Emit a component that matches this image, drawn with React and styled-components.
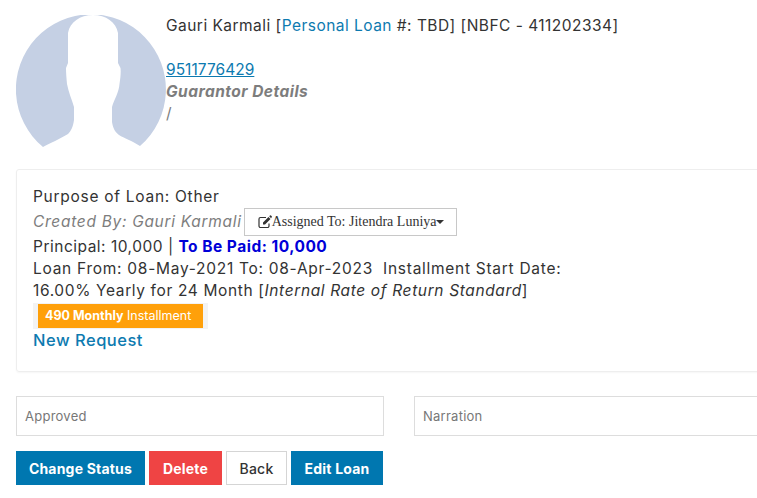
import React from 'react';
import styled, { createGlobalStyle } from 'styled-components';

const GlobalStyle = createGlobalStyle`
  html, body {
    margin: 0;
    height: 100%;
    overflow: hidden;
    background: #fff;
  }
`;

const Page = styled.div`
  box-sizing: border-box;
  width: 798px;
  padding: 15px 16px 0;
  font-family: 'Inter', 'Liberation Sans', sans-serif;
  font-size: 15.5px;
  color: #333;
`;

const Profile = styled.section`
  display: flex;
  height: 155px;
`;

const Avatar = styled.svg`
  flex: none;
  width: 150px;
  height: 134px;
`;

const Info = styled.div`
  line-height: 22px;
`;

const Line = styled.div`
  min-height: 22px;
  letter-spacing: ${p => p.$track || 0.47}px;
`;

const Accent = styled.span`
  color: #0d7ab0;
`;

const Phone = styled.a`
  color: #0d7ab0;
  text-decoration: underline;
  letter-spacing: 0.04px;
`;

const Guarantor = styled.div`
  color: #7d7d7d;
  font-style: italic;
  font-weight: 700;
  letter-spacing: 0.47px;
`;

const Muted = styled.div`
  color: #7d7d7d;
`;

const Card = styled.section`
  box-sizing: border-box;
  height: 203px;
  margin-top: -1px;
  padding: 16px 16px 0;
  border: 1px solid #eee;
  border-radius: 3px;
  box-shadow: 0 1px 2px rgba(0, 0, 0, 0.04);
  line-height: 22px;
`;

const CreatedRow = styled.div`
  display: flex;
  align-items: center;
  height: 28px;
  gap: 2px;
`;

const CreatedBy = styled.em`
  color: #7d7d7d;
  letter-spacing: 0.7px;
`;

const AssignButton = styled.button`
  display: flex;
  align-items: center;
  box-sizing: border-box;
  width: 213px;
  height: 28px;
  padding: 0 0 0 13px;
  border: 1px solid #c8c8c8;
  background: #fff;
  color: #333;
  font-family: 'Liberation Serif', serif;
  font-size: 14px;
  white-space: nowrap;
`;

const EditIcon = styled.svg`
  flex: none;
  width: 14px;
  height: 14px;
`;

const Caret = styled.span`
  width: 0;
  height: 0;
  border-left: 4px solid transparent;
  border-right: 4px solid transparent;
  border-top: 4px solid #333;
`;

const Paid = styled.strong`
  color: #0000d8;
  font-weight: 700;
`;

const BadgeRow = styled.div`
  display: flex;
  margin-top: 1px;
`;

const BadgeWrap = styled.div`
  padding: 1px 5px;
  background: #f3f3f3;
`;

const Badge = styled.div`
  box-sizing: border-box;
  width: 165px;
  height: 24px;
  padding-left: 7px;
  background: #ffa00a;
  color: #fff;
  font-size: 12.5px;
  line-height: 23px;
  white-space: nowrap;
`;

const Link = styled.a`
  color: #0d7ab0;
  font-size: 16.5px;
  font-weight: 500;
  text-decoration: none;
`;

const FormRow = styled.div`
  display: grid;
  grid-template-columns: 368px 368px;
  gap: 30px;
  margin-top: 24px;
`;

const Field = styled.div`
  box-sizing: border-box;
  height: 40px;
  padding-left: 8px;
  border: 1px solid #ddd;
  color: #777;
  font-size: 13px;
  line-height: 38px;
  letter-spacing: 0.25px;
`;

const Buttons = styled.div`
  display: flex;
  gap: 4px;
  margin-top: 15px;
`;

const colours = {
  primary: ['#0077b0', '#fff', '#0077b0'],
  danger: ['#ef4444', '#fff', '#ef4444'],
  plain: ['#fff', '#333', '#d5d5d5'],
};

const Button = styled.button`
  box-sizing: border-box;
  width: ${p => p.$w}px;
  height: 34px;
  padding: 0;
  border: 1px solid ${p => colours[p.$kind][2]};
  background: ${p => colours[p.$kind][0]};
  color: ${p => colours[p.$kind][1]};
  font-family: 'Inter', 'Liberation Sans', sans-serif;
  font-size: 14px;
  font-weight: ${p => (p.$kind === 'plain' ? 500 : 700)};
  letter-spacing: 0.2px;
`;

export default function App() {
  return (
    <Page>
      <GlobalStyle />
      <Profile>
        <Avatar viewBox="16 15 150 134">
          <path
            fill="#c5d0e4"
            d="M43 147 A75 75 0 1 1 140 146 C132 141 124 138 119 135 C115 132 113 128 112 122 L112 107 C114 100 119 92 119.500 84 C120.500 78 121 72 120.500 68 L118 63 L118 33 C116 22 106 15 93 15 C80 15 70 22 68 33 L68 63 L66 68 C66 73 66.500 78 67 84 C68.500 92 72 100 74 107 L74 120 C73 127 71 131 68 134 C60 139 50 143 43 147 Z"
          />
        </Avatar>
        <Info>
          <Line>
            Gauri Karmali [<Accent>Personal Loan</Accent> #: TBD] [NBFC - 411202334]
          </Line>
          <Line />
          <Line>
            <Phone href="#">9511776429</Phone>
          </Line>
          <Guarantor>Guarantor Details</Guarantor>
          <Muted>/</Muted>
        </Info>
      </Profile>
      <Card>
        <Line $track={0.72}>Purpose of Loan: Other</Line>
        <CreatedRow>
          <CreatedBy>Created By: Gauri Karmali</CreatedBy>
          <AssignButton>
            <EditIcon viewBox="0 0 14 14">
              <path
                fill="none"
                stroke="#333"
                strokeWidth="1.2"
                d="M11 8.500 V11 A1.500 1.500 0 0 1 9.500 12.500 H2.500 A1.500 1.500 0 0 1 1 11 V4 A1.500 1.500 0 0 1 2.500 2.500 H8"
              />
              <path fill="#333" d="M5 7.500 L10.500 2 L12.500 4 L7 9.500 H5 Z M11.200 1.300 L12 .5 A.7 .7 0 0 1 13 .5 L13.700 1.300 A.7 .7 0 0 1 13.700 2.300 L13.100 3.200 Z" />
            </EditIcon>
            Assigned To: Jitendra Luniya
            <Caret />
          </AssignButton>
        </CreatedRow>
        <Line $track={0.5}>
          Principal: 10,000 | <Paid>To Be Paid: 10,000</Paid>
        </Line>
        <Line $track={0.72}>Loan From: 08-May-2021 To: 08-Apr-2023 &nbsp;Installment Start Date:</Line>
        <Line $track={0.63}>
          16.00% Yearly for 24 Month [<em>Internal Rate of Return Standard</em>]
        </Line>
        <BadgeRow>
          <BadgeWrap>
            <Badge>
              <strong>490 Monthly</strong> Installment
            </Badge>
          </BadgeWrap>
        </BadgeRow>
        <Line $track={0.5}>
          <Link href="#">New Request</Link>
        </Line>
      </Card>
      <FormRow>
        <Field>Approved</Field>
        <Field>Narration</Field>
      </FormRow>
      <Buttons>
        <Button $kind="primary" $w={129}>Change Status</Button>
        <Button $kind="danger" $w={73}>Delete</Button>
        <Button $kind="plain" $w={61}>Back</Button>
        <Button $kind="primary" $w={92}>Edit Loan</Button>
      </Buttons>
    </Page>
  );
}
